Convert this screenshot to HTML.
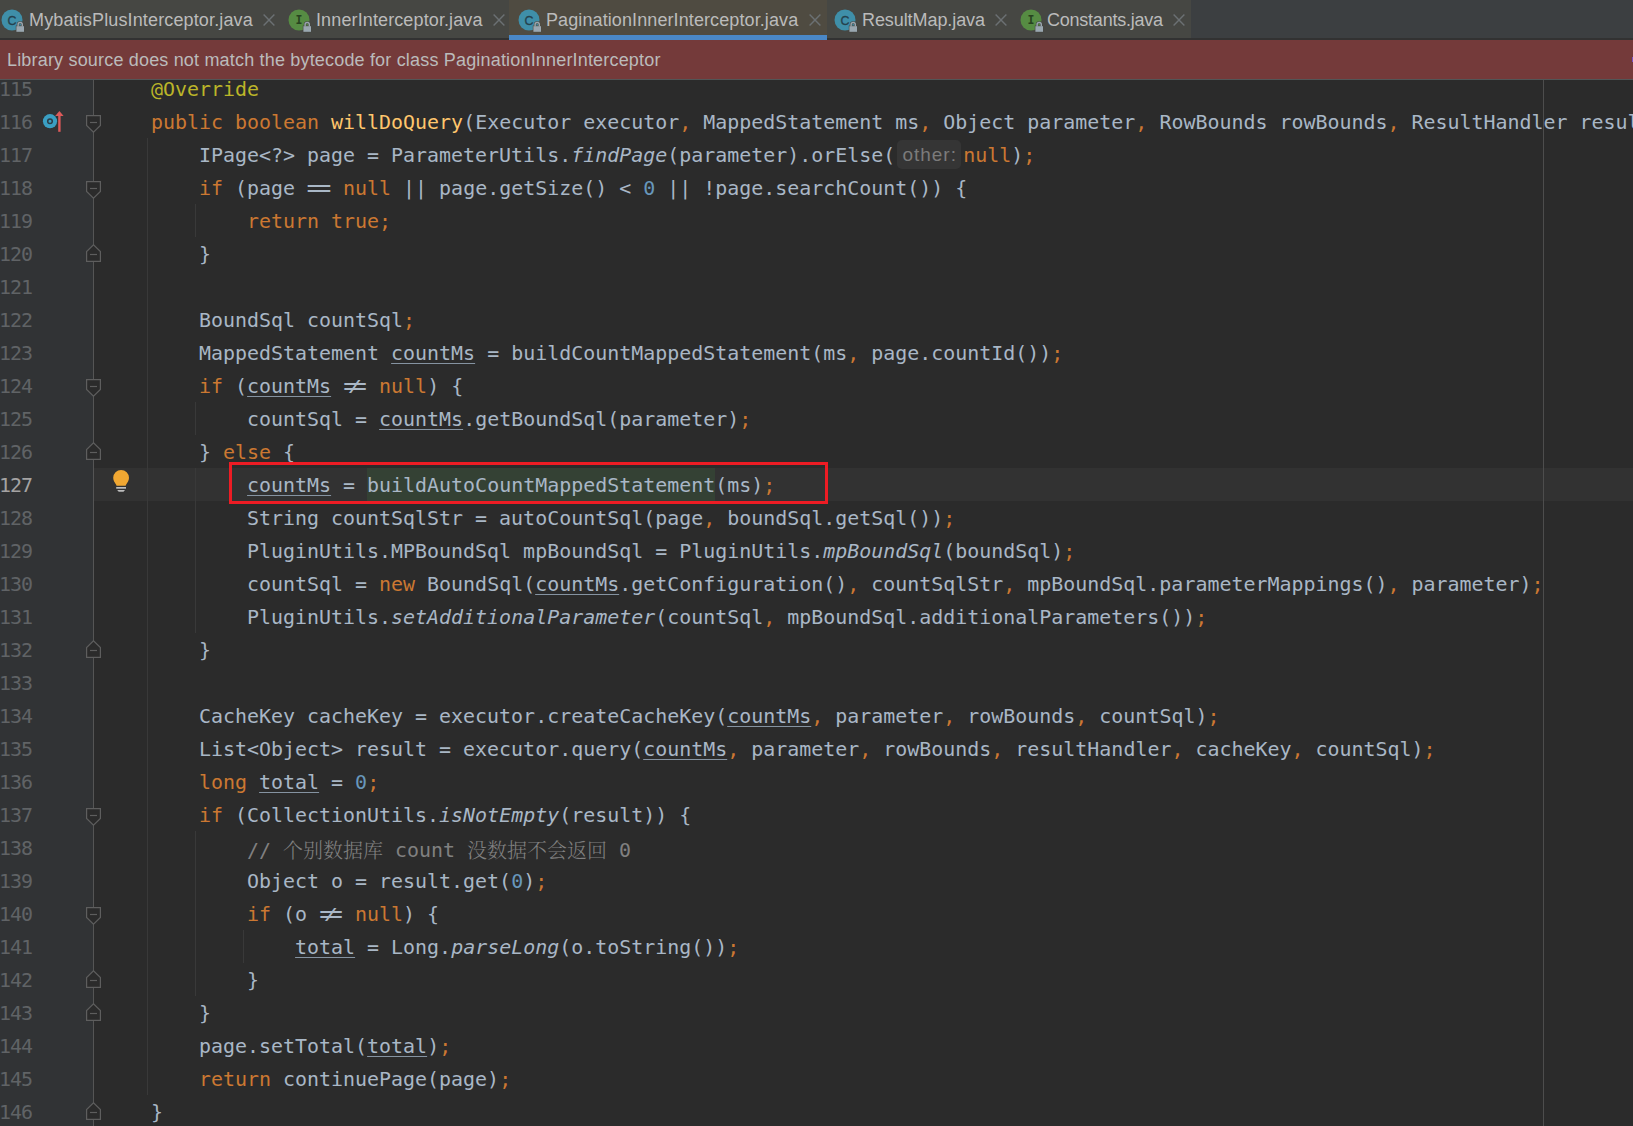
<!DOCTYPE html>
<html><head><meta charset="utf-8"><title>PaginationInnerInterceptor.java</title>
<style>
html,body{margin:0;padding:0;background:#2b2b2b;}
body{width:1633px;height:1126px;overflow:hidden;position:relative;font-family:"Liberation Sans","Noto Sans CJK SC",sans-serif;}
#tabs{position:absolute;left:0;top:0;width:1633px;height:40px;background:#3c3f41;box-sizing:border-box;border-bottom:2px solid #323232;}
#tabs .strip{position:absolute;left:0;top:0;width:1191px;height:38px;background:#464743;}
#tabs .seltab{position:absolute;left:509px;top:0;width:318px;height:40px;background:#4f4b41;}
#tabs .seltab:after{content:"";position:absolute;left:0;right:0;bottom:0;height:5px;background:#4a88c7;}
#tabs .t{position:absolute;top:9px;font-size:18px;line-height:22px;color:#bbbbbb;white-space:nowrap;}
#tabs svg{position:absolute;}
#banner{position:absolute;left:0;top:40px;width:1633px;height:39px;background:#743a3a;border-bottom:1px solid #525657;}
#banner span{letter-spacing:0.18px;position:absolute;left:7px;top:9px;font-size:18px;line-height:22px;color:#bbbbbb;white-space:nowrap;}
#ed{position:absolute;left:0;top:80px;width:1633px;height:1046px;overflow:hidden;background:#2b2b2b;}
#ed .in{position:absolute;left:0;top:-80px;width:1633px;height:1126px;}
#gut{position:absolute;left:0;top:0;width:93px;height:1126px;background:#313335;border-right:1px solid #555555;}
.row{position:absolute;left:0;width:1633px;height:33px;white-space:pre;font-family:"DejaVu Sans Mono","Liberation Mono","Noto Serif CJK SC",monospace;font-size:19.94px;line-height:33px;color:#a9b7c6;}
#caret{position:absolute;left:94px;top:468px;width:1539px;height:33px;background:#323232;}
.ln{position:absolute;left:-1px;top:1px;color:#606366;letter-spacing:-1px;}
.cur .ln{color:#a4a3a3;}
.code{position:absolute;left:103px;top:1px;}
.k{color:#cc7832}.d{color:#a9b7c6}.a{color:#bbb529}.m{color:#ffc66d}.n{color:#6897bb}.c{color:#808080}
.i{font-style:italic;color:#a9b7c6}
.u{color:#a9b7c6;text-decoration:underline;text-decoration-thickness:1px;text-underline-offset:3px;text-decoration-color:#8593a1;}
.cj{color:#808080;font-family:"Noto Serif CJK SC",serif;font-size:20px;font-weight:300;position:relative;top:0.5px;}
#hl{position:absolute;left:367px;top:468px;width:348px;height:33px;background:#344134;}
.hint{display:inline-block;vertical-align:top;box-sizing:border-box;margin:1px 2px 0 2px;width:64px;height:29px;line-height:29px;padding:0 0 0 1px;text-align:center;background:#353535;border-radius:5px;color:#7b7b7b;font-family:"Liberation Sans",sans-serif;font-size:19px;letter-spacing:0.95px;}
.eq,.ne{display:inline-block;width:24px;text-align:center;}
.ne{position:relative;height:33px;vertical-align:top;}
.ne .eq{position:absolute;top:0;width:12px;letter-spacing:0;text-indent:0;transform:scale(1.3,1.22);}
.ne .eq{left:2.2px}.ne .e2{left:9.8px}
.ne .sl{position:absolute;left:6px;top:0;width:12px;text-align:center;transform:scale(1.2,0.78);transform-origin:50% 18px;}
.eq{letter-spacing:-2.6px;text-indent:-2.6px;transform:scale(1.14,1.22);transform-origin:50% 18px;}
.guide{position:absolute;width:1px;background:#393939;}
.fold{position:absolute;left:86px;}
#margin{position:absolute;left:1543px;top:0;width:1px;height:1126px;background:#4d4d4d;}
#red{position:absolute;left:229px;top:462px;width:593px;height:36px;border:3px solid #ed1c24;}
</style></head><body>
<div id="tabs">
<div class="strip"></div><div class="seltab"></div>
<svg style="left:0px;top:7px" width="26" height="26" viewBox="0 0 26 26"><circle cx="12" cy="13" r="10.5" fill="#3f8fa9"/><text x="12" y="17.6" text-anchor="middle" font-family="Liberation Sans, sans-serif" font-size="12.5" fill="#25414d" stroke="#25414d" stroke-width="0.3">C</text><rect x="15.8" y="18.6" width="8.8" height="6.8" fill="#464743"/><path d="M18.1 19.4V17.6a2.1 2.1 0 0 1 4.2 0V19.4" fill="none" stroke="#464743" stroke-width="2.6"/><path d="M18.1 19.4V17.6a2.1 2.1 0 0 1 4.2 0V19.4" fill="none" stroke="#9aa7b0" stroke-width="1.4"/><rect x="16.4" y="19.2" width="7.6" height="5.6" fill="#9aa7b0"/></svg>
<span class="t" style="left:29px;letter-spacing:0.14px">MybatisPlusInterceptor.java</span>
<svg style="left:262px;top:13px" width="14" height="14" viewBox="0 0 14 14"><path d="M1.6 1.6L12.4 12.4M12.4 1.6L1.6 12.4" stroke="#6b7073" stroke-width="1.45" fill="none"/></svg>
<svg style="left:287px;top:7px" width="26" height="26" viewBox="0 0 26 26"><circle cx="12" cy="13" r="10.5" fill="#568c43"/><text x="12" y="17.2" text-anchor="middle" font-family="DejaVu Sans Mono, monospace" font-weight="bold" font-size="11.5" fill="#27431f">I</text><rect x="15.8" y="18.6" width="8.8" height="6.8" fill="#464743"/><path d="M18.1 19.4V17.6a2.1 2.1 0 0 1 4.2 0V19.4" fill="none" stroke="#464743" stroke-width="2.6"/><path d="M18.1 19.4V17.6a2.1 2.1 0 0 1 4.2 0V19.4" fill="none" stroke="#9aa7b0" stroke-width="1.4"/><rect x="16.4" y="19.2" width="7.6" height="5.6" fill="#9aa7b0"/></svg>
<span class="t" style="left:316px;letter-spacing:0.12px">InnerInterceptor.java</span>
<svg style="left:492px;top:13px" width="14" height="14" viewBox="0 0 14 14"><path d="M1.6 1.6L12.4 12.4M12.4 1.6L1.6 12.4" stroke="#6b7073" stroke-width="1.45" fill="none"/></svg>
<svg style="left:517px;top:7px" width="26" height="26" viewBox="0 0 26 26"><circle cx="12" cy="13" r="10.5" fill="#3f8fa9"/><text x="12" y="17.6" text-anchor="middle" font-family="Liberation Sans, sans-serif" font-size="12.5" fill="#25414d" stroke="#25414d" stroke-width="0.3">C</text><rect x="15.8" y="18.6" width="8.8" height="6.8" fill="#4f4b41"/><path d="M18.1 19.4V17.6a2.1 2.1 0 0 1 4.2 0V19.4" fill="none" stroke="#4f4b41" stroke-width="2.6"/><path d="M18.1 19.4V17.6a2.1 2.1 0 0 1 4.2 0V19.4" fill="none" stroke="#9aa7b0" stroke-width="1.4"/><rect x="16.4" y="19.2" width="7.6" height="5.6" fill="#9aa7b0"/></svg>
<span class="t" style="left:546px;letter-spacing:0.10px">PaginationInnerInterceptor.java</span>
<svg style="left:808px;top:13px" width="14" height="14" viewBox="0 0 14 14"><path d="M1.6 1.6L12.4 12.4M12.4 1.6L1.6 12.4" stroke="#6b7073" stroke-width="1.45" fill="none"/></svg>
<svg style="left:833px;top:7px" width="26" height="26" viewBox="0 0 26 26"><circle cx="12" cy="13" r="10.5" fill="#3f8fa9"/><text x="12" y="17.6" text-anchor="middle" font-family="Liberation Sans, sans-serif" font-size="12.5" fill="#25414d" stroke="#25414d" stroke-width="0.3">C</text><rect x="15.8" y="18.6" width="8.8" height="6.8" fill="#464743"/><path d="M18.1 19.4V17.6a2.1 2.1 0 0 1 4.2 0V19.4" fill="none" stroke="#464743" stroke-width="2.6"/><path d="M18.1 19.4V17.6a2.1 2.1 0 0 1 4.2 0V19.4" fill="none" stroke="#9aa7b0" stroke-width="1.4"/><rect x="16.4" y="19.2" width="7.6" height="5.6" fill="#9aa7b0"/></svg>
<span class="t" style="left:862px;letter-spacing:-0.08px">ResultMap.java</span>
<svg style="left:994px;top:13px" width="14" height="14" viewBox="0 0 14 14"><path d="M1.6 1.6L12.4 12.4M12.4 1.6L1.6 12.4" stroke="#6b7073" stroke-width="1.45" fill="none"/></svg>
<svg style="left:1019px;top:7px" width="26" height="26" viewBox="0 0 26 26"><circle cx="12" cy="13" r="10.5" fill="#568c43"/><text x="12" y="17.2" text-anchor="middle" font-family="DejaVu Sans Mono, monospace" font-weight="bold" font-size="11.5" fill="#27431f">I</text><rect x="15.8" y="18.6" width="8.8" height="6.8" fill="#464743"/><path d="M18.1 19.4V17.6a2.1 2.1 0 0 1 4.2 0V19.4" fill="none" stroke="#464743" stroke-width="2.6"/><path d="M18.1 19.4V17.6a2.1 2.1 0 0 1 4.2 0V19.4" fill="none" stroke="#9aa7b0" stroke-width="1.4"/><rect x="16.4" y="19.2" width="7.6" height="5.6" fill="#9aa7b0"/></svg>
<span class="t" style="left:1047px;letter-spacing:-0.23px">Constants.java</span>
<svg style="left:1172px;top:13px" width="14" height="14" viewBox="0 0 14 14"><path d="M1.6 1.6L12.4 12.4M12.4 1.6L1.6 12.4" stroke="#6b7073" stroke-width="1.45" fill="none"/></svg>
</div>
<div id="banner"><span>Library source does not match the bytecode for class PaginationInnerInterceptor</span></div>
<div style="position:absolute;left:1632px;top:57px;width:1px;height:5px;background:#7b52c4"></div>
<div id="ed"><div class="in">
<div id="gut"></div>
<div id="caret"></div><div id="hl"></div>
<div id="margin"></div>
<div class="guide" style="left:147px;top:138px;height:957px"></div>
<div class="guide" style="left:195px;top:204px;height:33px"></div>
<div class="guide" style="left:195px;top:402px;height:33px"></div>
<div class="guide" style="left:195px;top:468px;height:165px"></div>
<div class="guide" style="left:195px;top:831px;height:165px"></div>
<div class="guide" style="left:243px;top:930px;height:33px"></div>
<div class="row" style="top:72px"><span class="ln">115</span><span class="code">    <span class="a">@Override</span></span></div>
<div class="row" style="top:105px"><span class="ln">116</span><span class="code">    <span class="k">public boolean </span><span class="m">willDoQuery</span><span class="d">(Executor executor</span><span class="k">,</span><span class="d"> MappedStatement ms</span><span class="k">,</span><span class="d"> Object parameter</span><span class="k">,</span><span class="d"> RowBounds rowBounds</span><span class="k">,</span><span class="d"> ResultHandler resultHandler</span></span></div>
<div class="row" style="top:138px"><span class="ln">117</span><span class="code">        <span class="d">IPage&lt;?&gt; page = ParameterUtils.</span><span class="i">findPage</span><span class="d">(parameter).orElse(</span><span class="hint">other:</span><span class="k">null</span><span class="d">)</span><span class="k">;</span></span></div>
<div class="row" style="top:171px"><span class="ln">118</span><span class="code">        <span class="k">if </span><span class="d">(page </span><span class="eq">==</span><span class="k"> null </span><span class="d">|| page.getSize() &lt; </span><span class="n">0</span><span class="d"> || !page.searchCount()) {</span></span></div>
<div class="row" style="top:204px"><span class="ln">119</span><span class="code">            <span class="k">return true;</span></span></div>
<div class="row" style="top:237px"><span class="ln">120</span><span class="code">        <span class="d">}</span></span></div>
<div class="row" style="top:270px"><span class="ln">121</span><span class="code"></span></div>
<div class="row" style="top:303px"><span class="ln">122</span><span class="code">        <span class="d">BoundSql countSql</span><span class="k">;</span></span></div>
<div class="row" style="top:336px"><span class="ln">123</span><span class="code">        <span class="d">MappedStatement </span><span class="u">countMs</span><span class="d"> = buildCountMappedStatement(ms</span><span class="k">,</span><span class="d"> page.countId())</span><span class="k">;</span></span></div>
<div class="row" style="top:369px"><span class="ln">124</span><span class="code">        <span class="k">if </span><span class="d">(</span><span class="u">countMs</span><span class="d"> </span><span class="ne"><span class="eq">=</span><span class="sl">/</span><span class="eq e2">=</span></span><span class="k"> null</span><span class="d">) {</span></span></div>
<div class="row" style="top:402px"><span class="ln">125</span><span class="code">            <span class="d">countSql = </span><span class="u">countMs</span><span class="d">.getBoundSql(parameter)</span><span class="k">;</span></span></div>
<div class="row" style="top:435px"><span class="ln">126</span><span class="code">        <span class="d">} </span><span class="k">else </span><span class="d">{</span></span></div>
<div class="row cur" style="top:468px"><span class="ln">127</span><span class="code">            <span class="u">countMs</span><span class="d"> = </span><span class="hl">buildAutoCountMappedStatement</span><span class="d">(ms)</span><span class="k">;</span></span></div>
<div class="row" style="top:501px"><span class="ln">128</span><span class="code">            <span class="d">String countSqlStr = autoCountSql(page</span><span class="k">,</span><span class="d"> boundSql.getSql())</span><span class="k">;</span></span></div>
<div class="row" style="top:534px"><span class="ln">129</span><span class="code">            <span class="d">PluginUtils.MPBoundSql mpBoundSql = PluginUtils.</span><span class="i">mpBoundSql</span><span class="d">(boundSql)</span><span class="k">;</span></span></div>
<div class="row" style="top:567px"><span class="ln">130</span><span class="code">            <span class="d">countSql = </span><span class="k">new </span><span class="d">BoundSql(</span><span class="u">countMs</span><span class="d">.getConfiguration()</span><span class="k">,</span><span class="d"> countSqlStr</span><span class="k">,</span><span class="d"> mpBoundSql.parameterMappings()</span><span class="k">,</span><span class="d"> parameter)</span><span class="k">;</span></span></div>
<div class="row" style="top:600px"><span class="ln">131</span><span class="code">            <span class="d">PluginUtils.</span><span class="i">setAdditionalParameter</span><span class="d">(countSql</span><span class="k">,</span><span class="d"> mpBoundSql.additionalParameters())</span><span class="k">;</span></span></div>
<div class="row" style="top:633px"><span class="ln">132</span><span class="code">        <span class="d">}</span></span></div>
<div class="row" style="top:666px"><span class="ln">133</span><span class="code"></span></div>
<div class="row" style="top:699px"><span class="ln">134</span><span class="code">        <span class="d">CacheKey cacheKey = executor.createCacheKey(</span><span class="u">countMs</span><span class="k">,</span><span class="d"> parameter</span><span class="k">,</span><span class="d"> rowBounds</span><span class="k">,</span><span class="d"> countSql)</span><span class="k">;</span></span></div>
<div class="row" style="top:732px"><span class="ln">135</span><span class="code">        <span class="d">List&lt;Object&gt; result = executor.query(</span><span class="u">countMs</span><span class="k">,</span><span class="d"> parameter</span><span class="k">,</span><span class="d"> rowBounds</span><span class="k">,</span><span class="d"> resultHandler</span><span class="k">,</span><span class="d"> cacheKey</span><span class="k">,</span><span class="d"> countSql)</span><span class="k">;</span></span></div>
<div class="row" style="top:765px"><span class="ln">136</span><span class="code">        <span class="k">long </span><span class="u">total</span><span class="d"> = </span><span class="n">0</span><span class="k">;</span></span></div>
<div class="row" style="top:798px"><span class="ln">137</span><span class="code">        <span class="k">if </span><span class="d">(CollectionUtils.</span><span class="i">isNotEmpty</span><span class="d">(result)) {</span></span></div>
<div class="row" style="top:831px"><span class="ln">138</span><span class="code">            <span class="c">// </span><span class="cj">个别数据库</span><span class="c"> count </span><span class="cj">没数据不会返回</span><span class="c"> 0</span></span></div>
<div class="row" style="top:864px"><span class="ln">139</span><span class="code">            <span class="d">Object o = result.get(</span><span class="n">0</span><span class="d">)</span><span class="k">;</span></span></div>
<div class="row" style="top:897px"><span class="ln">140</span><span class="code">            <span class="k">if </span><span class="d">(o </span><span class="ne"><span class="eq">=</span><span class="sl">/</span><span class="eq e2">=</span></span><span class="k"> null</span><span class="d">) {</span></span></div>
<div class="row" style="top:930px"><span class="ln">141</span><span class="code">                <span class="u">total</span><span class="d"> = Long.</span><span class="i">parseLong</span><span class="d">(o.toString())</span><span class="k">;</span></span></div>
<div class="row" style="top:963px"><span class="ln">142</span><span class="code">            <span class="d">}</span></span></div>
<div class="row" style="top:996px"><span class="ln">143</span><span class="code">        <span class="d">}</span></span></div>
<div class="row" style="top:1029px"><span class="ln">144</span><span class="code">        <span class="d">page.setTotal(</span><span class="u">total</span><span class="d">)</span><span class="k">;</span></span></div>
<div class="row" style="top:1062px"><span class="ln">145</span><span class="code">        <span class="k">return </span><span class="d">continuePage(page)</span><span class="k">;</span></span></div>
<div class="row" style="top:1095px"><span class="ln">146</span><span class="code">    <span class="d">}</span></span></div>
<svg class="fold" style="top:115px" width="15" height="18" viewBox="0 0 15 18"><path d="M0.6 0.6H14.4V10.4L7.5 17.2L0.6 10.4Z" fill="#2b2b2b" stroke="#5e5e5e" stroke-width="1.2"/><path d="M4 7.5H11" stroke="#5e5e5e" stroke-width="1.2"/></svg>
<svg class="fold" style="top:181px" width="15" height="18" viewBox="0 0 15 18"><path d="M0.6 0.6H14.4V10.4L7.5 17.2L0.6 10.4Z" fill="#2b2b2b" stroke="#5e5e5e" stroke-width="1.2"/><path d="M4 7.5H11" stroke="#5e5e5e" stroke-width="1.2"/></svg>
<svg class="fold" style="top:379px" width="15" height="18" viewBox="0 0 15 18"><path d="M0.6 0.6H14.4V10.4L7.5 17.2L0.6 10.4Z" fill="#2b2b2b" stroke="#5e5e5e" stroke-width="1.2"/><path d="M4 7.5H11" stroke="#5e5e5e" stroke-width="1.2"/></svg>
<svg class="fold" style="top:808px" width="15" height="18" viewBox="0 0 15 18"><path d="M0.6 0.6H14.4V10.4L7.5 17.2L0.6 10.4Z" fill="#2b2b2b" stroke="#5e5e5e" stroke-width="1.2"/><path d="M4 7.5H11" stroke="#5e5e5e" stroke-width="1.2"/></svg>
<svg class="fold" style="top:907px" width="15" height="18" viewBox="0 0 15 18"><path d="M0.6 0.6H14.4V10.4L7.5 17.2L0.6 10.4Z" fill="#2b2b2b" stroke="#5e5e5e" stroke-width="1.2"/><path d="M4 7.5H11" stroke="#5e5e5e" stroke-width="1.2"/></svg>
<svg class="fold" style="top:244px" width="15" height="18" viewBox="0 0 15 18"><path d="M0.6 17.4H14.4V7.6L7.5 0.8L0.6 7.6Z" fill="#2b2b2b" stroke="#5e5e5e" stroke-width="1.2"/><path d="M4 10.5H11" stroke="#5e5e5e" stroke-width="1.2"/></svg>
<svg class="fold" style="top:442px" width="15" height="18" viewBox="0 0 15 18"><path d="M0.6 17.4H14.4V7.6L7.5 0.8L0.6 7.6Z" fill="#2b2b2b" stroke="#5e5e5e" stroke-width="1.2"/><path d="M4 10.5H11" stroke="#5e5e5e" stroke-width="1.2"/></svg>
<svg class="fold" style="top:640px" width="15" height="18" viewBox="0 0 15 18"><path d="M0.6 17.4H14.4V7.6L7.5 0.8L0.6 7.6Z" fill="#2b2b2b" stroke="#5e5e5e" stroke-width="1.2"/><path d="M4 10.5H11" stroke="#5e5e5e" stroke-width="1.2"/></svg>
<svg class="fold" style="top:970px" width="15" height="18" viewBox="0 0 15 18"><path d="M0.6 17.4H14.4V7.6L7.5 0.8L0.6 7.6Z" fill="#2b2b2b" stroke="#5e5e5e" stroke-width="1.2"/><path d="M4 10.5H11" stroke="#5e5e5e" stroke-width="1.2"/></svg>
<svg class="fold" style="top:1003px" width="15" height="18" viewBox="0 0 15 18"><path d="M0.6 17.4H14.4V7.6L7.5 0.8L0.6 7.6Z" fill="#2b2b2b" stroke="#5e5e5e" stroke-width="1.2"/><path d="M4 10.5H11" stroke="#5e5e5e" stroke-width="1.2"/></svg>
<svg class="fold" style="top:1102px" width="15" height="18" viewBox="0 0 15 18"><path d="M0.6 17.4H14.4V7.6L7.5 0.8L0.6 7.6Z" fill="#2b2b2b" stroke="#5e5e5e" stroke-width="1.2"/><path d="M4 10.5H11" stroke="#5e5e5e" stroke-width="1.2"/></svg>
<svg id="ovr" width="24" height="24" viewBox="0 0 24 24" style="position:absolute;left:41px;top:109px"><circle cx="9" cy="12.2" r="7.1" fill="#3a9fc3"/><circle cx="9" cy="12.2" r="2.3" fill="none" stroke="#2b3d47" stroke-width="1.5"/><path d="M18.4 22.8V6" stroke="#dc5a5a" stroke-width="2.4" fill="none"/><path d="M14.2 7L18.4 2L22.6 7Z" fill="#dc5a5a"/></svg>
<svg id="bulb" width="20" height="26" viewBox="0 0 20 26" style="position:absolute;left:111px;top:468px"><path d="M10.1 1.9a7.9 7.9 0 0 1 7.9 7.9c0 3-1.6 5-2.8 6.6c-0.5 0.7-0.5 1.2-0.5 1.4H5.5c0-0.2 0-0.7-0.5-1.4C3.800 14.800 2.200 12.800 2.200 9.800a7.900 7.900 0 0 1 7.900-7.900z" fill="#f0a732"/><rect x="5.200" y="19" width="9.800" height="1.700" fill="#bdbdbd"/><path d="M6.2 22H14l-1.500 1.800H7.700z" fill="#bdbdbd"/></svg>
<div id="red"></div>
</div></div>
</body></html>
